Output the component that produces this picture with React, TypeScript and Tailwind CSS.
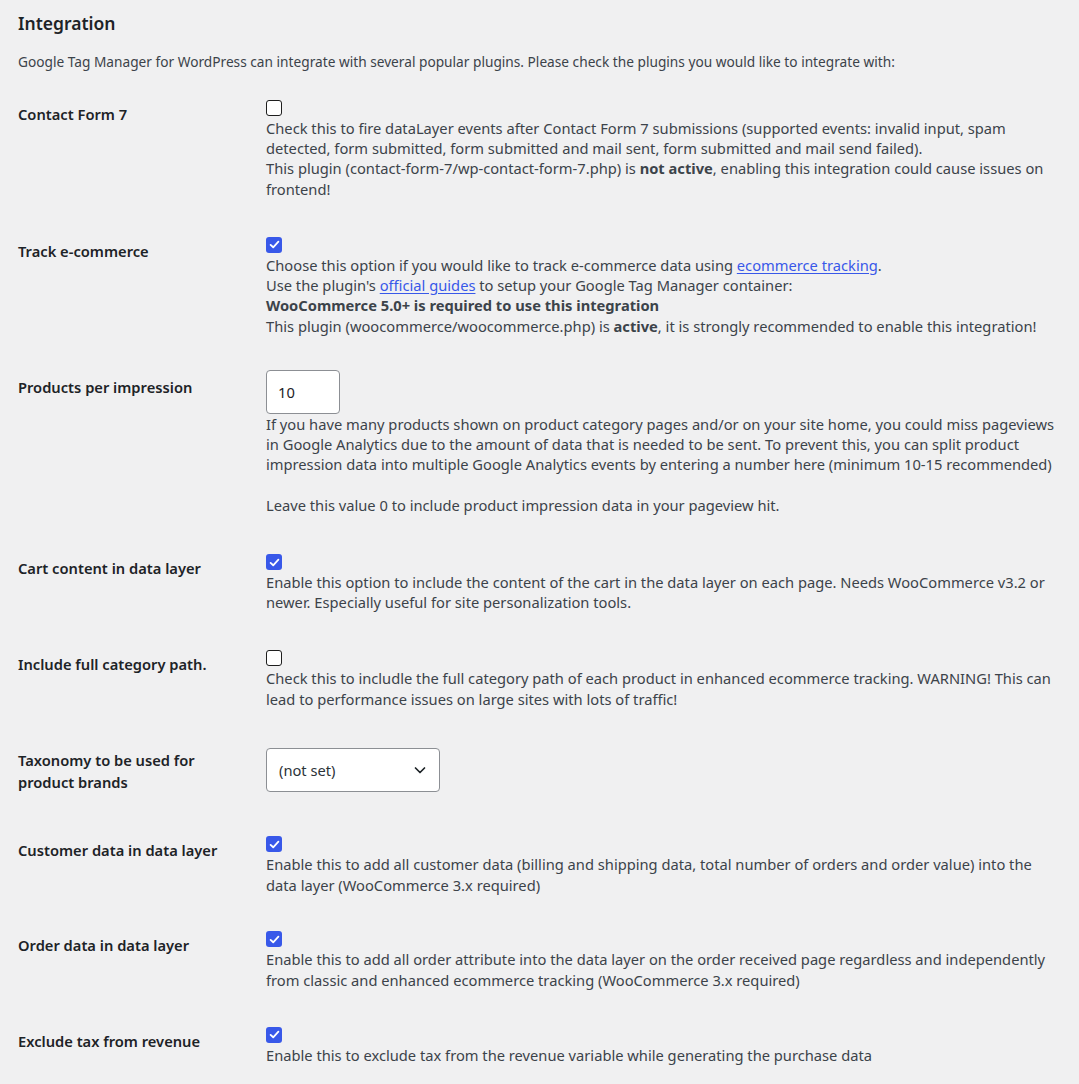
import React from "react";

type Line = React.ReactNode;

function Checkbox({ checked }: { checked: boolean }) {
  return checked ? (
    <span className="flex h-4 w-4 items-center justify-center rounded-[3px] bg-[#3858e9]">
      <svg viewBox="0 0 16 16" className="h-[13px] w-[13px]" fill="none">
        <path d="M3.2 8.4 6.4 11.4 12.8 4.6" stroke="#fff" strokeWidth="2.2" strokeLinecap="round" strokeLinejoin="round" />
      </svg>
    </span>
  ) : (
    <span className="block h-4 w-4 rounded-[3px] border-[1.5px] border-[#1e1e1e] bg-white" />
  );
}

function Desc({ lines }: { lines: Line[] }) {
  return (
    <div className="whitespace-nowrap text-[14.7px] leading-[20.4px] text-[#3c434a]">
      {lines.map((l, i) => (
        <div key={i} className="h-[20.4px]">
          {l}
        </div>
      ))}
    </div>
  );
}

function Row({ label, control, lines, pt = "pt-[14.5px]", pb = "pb-[23px]", after = "" }: { label: Line; control: React.ReactNode; lines?: Line[]; pt?: string; pb?: string; after?: string }) {
  return (
    <div className={`grid grid-cols-[248px_1fr] ${pb}`}>
      <div className="pt-[17.5px] pr-2 text-[14.7px] font-semibold leading-[22px] text-[#1d2327]">{label}</div>
      <div className={pt}>
        <div className={after}>{control}</div>
        {lines && <Desc lines={lines} />}
      </div>
    </div>
  );
}

const Link = ({ children }: { children: React.ReactNode }) => (
  <span className="text-[#3858e9] underline underline-offset-2">{children}</span>
);

export default function App() {
  return (
    <div className="min-h-[1084px] bg-[#f0f0f1] px-[18px] font-['Noto_Sans','Open_Sans',sans-serif]">
      <h2 className="pt-[10px] text-[17.5px] font-semibold leading-[26px] text-[#1d2327]">Integration</h2>
      <p className="mt-[16px] text-[13.7px] leading-[20px] text-[#3c434a]">
        Google Tag Manager for WordPress can integrate with several popular plugins. Please check the plugins you would like to integrate with:
      </p>
      <div className="mt-[13px]">
        <Row
          label="Contact Form 7"
          control={<Checkbox checked={false} />}
          after="mb-[2px]"
          lines={[
            "Check this to fire dataLayer events after Contact Form 7 submissions (supported events: invalid input, spam",
            "detected, form submitted, form submitted and mail sent, form submitted and mail send failed).",
            <>
              This plugin (contact-form-7/wp-contact-form-7.php) is <b className="font-bold">not active</b>, enabling this integration could cause issues on
            </>,
            "frontend!",
          ]}
        />
        <Row
          label="Track e-commerce"
          control={<Checkbox checked />}
          after="mb-[2px]"
          pb="pb-[22px]"
          lines={[
            <>
              Choose this option if you would like to track e-commerce data using <Link>ecommerce tracking</Link>.
            </>,
            <>
              Use the plugin's <Link>official guides</Link> to setup your Google Tag Manager container:
            </>,
            <b className="font-bold">WooCommerce 5.0+ is required to use this integration</b>,
            <>
              This plugin (woocommerce/woocommerce.php) is <b className="font-bold">active</b>, it is strongly recommended to enable this integration!
            </>,
          ]}
        />
        <Row
          label="Products per impression"
          pt="pt-[11.5px]"
          pb="pb-[24px]"
          control={
            <div className="flex h-[44px] w-[74px] items-center rounded-[4px] border border-[#8c8f94] bg-white px-[11px] text-[14.7px] text-[#1d2327]">
              10
            </div>
          }
          lines={[
            "If you have many products shown on product category pages and/or on your site home, you could miss pageviews",
            "in Google Analytics due to the amount of data that is needed to be sent. To prevent this, you can split product",
            "impression data into multiple Google Analytics events by entering a number here (minimum 10-15 recommended)",
            "",
            "Leave this value 0 to include product impression data in your pageview hit.",
          ]}
        />
        <Row
          label="Cart content in data layer"
          control={<Checkbox checked />}
          after="mb-[2px]"
          lines={[
            "Enable this option to include the content of the cart in the data layer on each page. Needs WooCommerce v3.2 or",
            "newer. Especially useful for site personalization tools.",
          ]}
        />
        <Row
          label="Include full category path."
          control={<Checkbox checked={false} />}
          after="mb-[2px]"
          pb="pb-[22px]"
          lines={[
            "Check this to includle the full category path of each product in enhanced ecommerce tracking. WARNING! This can",
            "lead to performance issues on large sites with lots of traffic!",
          ]}
        />
        <Row
          label={
            <>
              Taxonomy to be used for
              <br />
              product brands
            </>
          }
          pt="pt-[16.5px]"
          after="mb-[7px]"
          control={
            <div className="flex h-[44px] w-[174px] items-center justify-between rounded-[4px] border border-[#8c8f94] bg-white pl-[12px] pr-[11px] text-[14.7px] text-[#2c3338]">
              <span>(not set)</span>
              <svg viewBox="0 0 16 16" className="h-4 w-4" fill="none">
                <path d="M3.5 6 8 10.5 12.5 6" stroke="#1d2327" strokeWidth="1.7" strokeLinecap="round" strokeLinejoin="round" />
              </svg>
            </div>
          }
        />
        <Row
          label="Customer data in data layer"
          control={<Checkbox checked />}
          after="mb-[2px]"
          pb="pb-[22px]"
          lines={[
            "Enable this to add all customer data (billing and shipping data, total number of orders and order value) into the",
            "data layer (WooCommerce 3.x required)",
          ]}
        />
        <Row
          label="Order data in data layer"
          control={<Checkbox checked />}
          after="mb-[2px]"
          pb="pb-[22px]"
          lines={[
            "Enable this to add all order attribute into the data layer on the order received page regardless and independently",
            "from classic and enhanced ecommerce tracking (WooCommerce 3.x required)",
          ]}
        />
        <Row
          label="Exclude tax from revenue"
          control={<Checkbox checked />}
          after="mb-[2px]"
          lines={["Enable this to exclude tax from the revenue variable while generating the purchase data"]}
        />
      </div>
    </div>
  );
}
